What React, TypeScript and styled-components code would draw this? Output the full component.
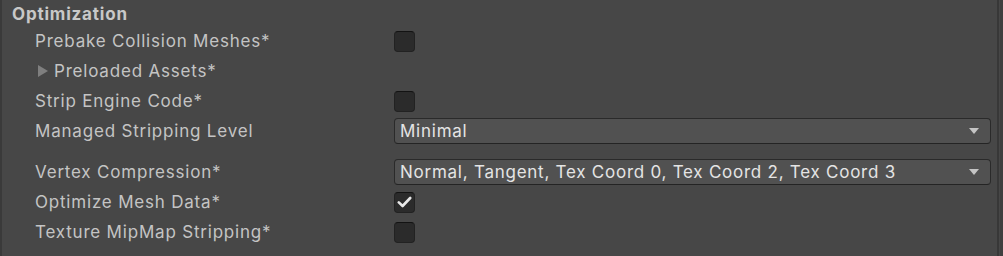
import React from "react";
import styled, { createGlobalStyle } from "styled-components";

const Global = createGlobalStyle`
  html, body { margin: 0; padding: 0; background: #474747; }
  body { font-family: Inter, "Noto Sans", sans-serif; }
`;

const Panel = styled.div`
  width: 1003px;
  height: 256px;
  box-sizing: border-box;
  background: #474747;
  border-left: 2px solid #3a3a3a;
  border-right: 3px solid #3f3f3f;
  display: flex;
  flex-direction: column;
  position: relative;
  &::after {
    content: "";
    position: absolute;
    top: 0;
    bottom: 0;
    right: 1px;
    width: 2px;
    background: #383838;
  }
`;

const Header = styled.div`
  height: 26px;
  display: flex;
  align-items: center;
  padding-left: 10px;
  padding-top: 1px;
  box-sizing: border-box;
  font-weight: 700;
  font-size: 17px;
  letter-spacing: 0.8px;
  color: #c8c8c8;
`;

const Row = styled.div<{ $gapTop?: number }>`
  height: 30px;
  margin-top: ${(p) => p.$gapTop ?? 0}px;
  display: grid;
  grid-template-columns: 359px 1fr;
  align-items: center;
  padding-left: 33px;
  padding-right: 9px;
`;

const Label = styled.div`
  font-size: 17px;
  letter-spacing: 0.8px;
  color: #c4c4c4;
  display: flex;
  align-items: center;
  white-space: nowrap;
`;

const Foldout = styled.span`
  display: inline-block;
  width: 0;
  height: 0;
  border-top: 6px solid transparent;
  border-bottom: 6px solid transparent;
  border-left: 10px solid #7f7f7f;
  margin-left: 3px;
  margin-right: 6px;
`;

const Check = styled.div`
  width: 21px;
  height: 21px;
  box-sizing: border-box;
  border-radius: 4px;
  background: #2b2b2b;
  border: 1px solid #222222;
  border-top-color: #131313;
  display: flex;
  align-items: center;
  justify-content: center;
`;

const Dropdown = styled.div`
  height: 26px;
  box-sizing: border-box;
  border-radius: 4px;
  background: #515151;
  border: 1px solid #2a2a2a;
  border-bottom-color: #242424;
  display: flex;
  align-items: center;
  justify-content: space-between;
  padding-left: 5px;
  padding-right: 11px;
  font-size: 17px;
  letter-spacing: 0.75px;
  color: #e4e4e4;
  white-space: nowrap;
`;

const Arrow = styled.span`
  width: 0;
  height: 0;
  border-left: 5px solid transparent;
  border-right: 5px solid transparent;
  border-top: 6px solid #c4c4c4;
`;

const CheckMark = () => (
  <svg width="15" height="12" viewBox="0 0 15 12">
    <path d="M1.8 6.4 L5.6 10 L13.2 2" fill="none" stroke="#e8e8e8" strokeWidth="2.6" strokeLinecap="round" strokeLinejoin="round" />
  </svg>
);

export default function App() {
  return (
    <>
      <Global />
      <Panel>
        <Header>Optimization</Header>
        <Row>
          <Label>Prebake Collision Meshes*</Label>
          <Check />
        </Row>
        <Row>
          <Label>
            <Foldout />
            Preloaded Assets*
          </Label>
        </Row>
        <Row>
          <Label>Strip Engine Code*</Label>
          <Check />
        </Row>
        <Row>
          <Label>Managed Stripping Level</Label>
          <Dropdown>
            Minimal
            <Arrow />
          </Dropdown>
        </Row>
        <Row $gapTop={11}>
          <Label>Vertex Compression*</Label>
          <Dropdown>
            Normal, Tangent, Tex Coord 0, Tex Coord 2, Tex Coord 3
            <Arrow />
          </Dropdown>
        </Row>
        <Row>
          <Label>Optimize Mesh Data*</Label>
          <Check>
            <CheckMark />
          </Check>
        </Row>
        <Row>
          <Label>Texture MipMap Stripping*</Label>
          <Check />
        </Row>
      </Panel>
    </>
  );
}
